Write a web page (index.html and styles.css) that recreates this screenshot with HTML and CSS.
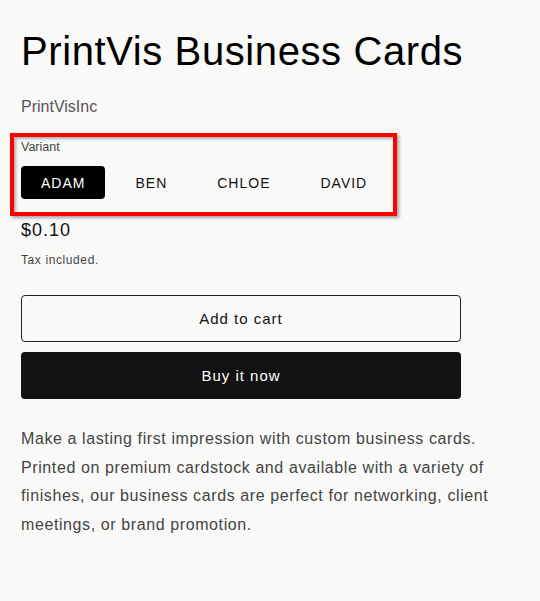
FILE: index.html
```html
<!DOCTYPE html>
<html lang="en">
<head>
<meta charset="utf-8">
<title>PrintVis Business Cards</title>
<link rel="stylesheet" href="styles.css">
</head>
<body>
<main class="product">
  <h1 class="title">PrintVis Business Cards</h1>
  <p class="vendor">PrintVisInc</p>
  <div class="highlight">
    <div class="variant">
      <div class="variant-label">Variant</div>
      <div class="variant-options">
        <button class="pill pill-active">ADAM</button>
        <button class="pill">BEN</button>
        <button class="pill">CHLOE</button>
        <button class="pill">DAVID</button>
      </div>
    </div>
  </div>
  <div class="price">$0.10</div>
  <div class="tax">Tax included.</div>
  <div class="actions">
    <button class="btn btn-outline">Add to cart</button>
    <button class="btn btn-solid">Buy it now</button>
  </div>
  <p class="description">Make a lasting first impression with custom business cards. Printed on premium cardstock and available with a variety of finishes, our business cards are perfect for networking, client meetings, or brand promotion.</p>
</main>
</body>
</html>
```
FILE: styles.css
```css
* { box-sizing: border-box; }
html, body { margin: 0; padding: 0; }
body {
  background: #f9f9f8;
  font-family: "Liberation Sans", Arial, sans-serif;
  color: #121212;
}
.product {
  padding: 25px 0 0 21px;
  width: 540px;
}
.title {
  margin: 0;
  font-size: 40px;
  font-weight: 400;
  line-height: 52px;
  letter-spacing: 0.6px;
  color: #000;
}
.vendor {
  margin: 21px 0 0;
  font-size: 16px;
  line-height: 18px;
  color: #555;
  letter-spacing: 0;
}
.highlight {
  margin: 17px 0 0 -11px;
  width: 387px;
  border: 4px solid #ff0000;
  box-shadow: 2px 2px 3px rgba(0,0,0,0.35), inset 2px 2px 3px rgba(0,0,0,0.3);
  padding: 2px 7px 13px;
}
.variant-label {
  font-size: 12.5px;
  line-height: 16px;
  color: #444;
}
.variant-options {
  display: flex;
  gap: 10px;
  margin-top: 11px;
}
.pill {
  flex: 0 0 auto;
  font-family: "Liberation Sans", Arial, sans-serif;
  font-size: 14px;
  letter-spacing: 1px;
  height: 33px;
  border: none;
  background: transparent;
  color: #121212;
  border-radius: 4px;
  padding: 0 20px;
}
.pill-active {
  background: #000;
  color: #fff;
}
.price {
  margin-top: 3px;
  font-size: 18px;
  line-height: 22px;
  letter-spacing: 1px;
}
.tax {
  margin-top: 11px;
  font-size: 12px;
  line-height: 16px;
  letter-spacing: 0.6px;
  color: #444;
}
.actions {
  margin-top: 27px;
  width: 440px;
  display: flex;
  flex-direction: column;
  gap: 10px;
}
.btn {
  height: 47px;
  font-family: "Liberation Sans", Arial, sans-serif;
  font-size: 15px;
  letter-spacing: 1px;
  border-radius: 4px;
  padding: 0;
}
.btn-outline {
  background: transparent;
  border: 1px solid #222;
  color: #121212;
}
.btn-solid {
  background: #121212;
  border: none;
  color: #fff;
}
.description {
  margin: 26px 0 0;
  width: 500px;
  font-size: 16px;
  line-height: 28.6px;
  letter-spacing: 0.6px;
  color: #444;
}
```
